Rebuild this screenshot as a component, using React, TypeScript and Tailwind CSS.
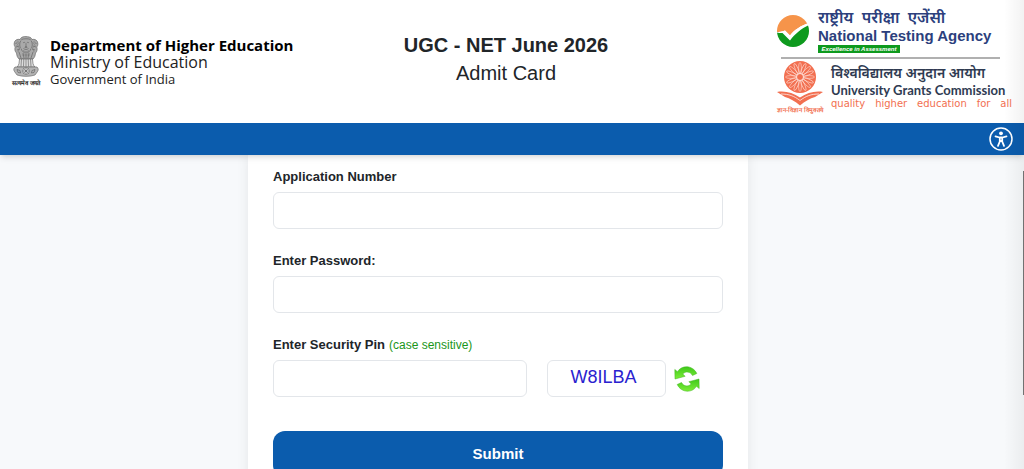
import { useState, type FormEvent } from "react";

const RAYS = Array.from({ length: 16 }, (_, i) => i * 22.5);

function NationalEmblem() {
  return (
    <svg viewBox="0 0 28 42" className="h-[42px] w-7" fill="none" stroke="#5a5a5a" strokeWidth="0.6">
      {/* lions */}
      <path fill="#a9a9a9" d="M8 3.5C9 .8 12 .4 14 .6s5 .1 6 2.9c2.500-.8 5.500.5 5.800 3.500.3 2-.3 3-1 4 .8 2.500.2 4.500-1.300 6-.2 2.500-.9 4.500-2.500 6H7c-1.600-1.500-2.300-3.500-2.500-6C3 15.500 2.400 13.500 3.200 11c-.7-1-1.300-2-1-4C2.500 4 5.500 2.700 8 3.500Z" />
      <path d="M9 4.500c-1.500 2-1.700 5-.6 7.500M19 4.500c1.500 2 1.700 5 .6 7.500M9.500 3.500c2.500-1 6.500-1 9 0M11 7c.8-.8 1.700-.8 2.300 0M14.700 7c.6-.8 1.500-.8 2.300 0M14 7.500v3l-1.200.8h2.400l-1.200-.8M11.500 12.500c1.500 1.300 3.500 1.300 5 0M9 12.500c1 3 3 4.500 5 4.500s4-1.500 5-4.500M3.500 7.500l2-.8M24.500 7.500l-2-.8M4 11l3-1M24 11l-3-1M5 14l3-1M23 14l-3-1M7 16l2 6M21 16l-2 6M11 17l1 5M17 17l-1 5M14 18v4" />
      <path stroke="#777" d="M5 4.500l2 2-2 3 2.500 2.500-1.500 4M23 4.500l-2 2 2 3-2.500 2.500 1.500 4M11 14.500l3 1.500 3-1.500M10 19h8" />
      {/* bell and column */}
      <path fill="#dcdcdc" d="M7.500 23h13l.5 4.500c.3 1.500 1 2.500 2 3.500H5c1-1 1.700-2 2-3.500Z" />
      <path d="M9.500 23L9 30.500M11.800 23l-.3 7.500M14 23v7.500M16.200 23l.3 7.500M18.500 23l.5 7.500" />
      {/* abacus with wheel */}
      <path fill="#b5b5b5" d="M3 31h22c1.500 1.500 1.500 3 .5 4.500L23 39c-5 1.800-13 1.800-18 0l-2.500-3.500C1.500 34 1.500 32.500 3 31Z" />
      <circle cx="14" cy="35" r="3.300" fill="#eee" />
      <path d="M10.700 35h6.600M14 31.700v6.600M11.700 32.700l4.600 4.600M16.300 32.700l-4.600 4.600M5 33.500l3 1 .5 2.500-2.500-.5ZM23 33.500l-3 1-.5 2.500 2.500-.5Z" />
    </svg>
  );
}

function TestingAgencyMark() {
  return (
    <svg viewBox="0 0 32 32" className="size-8 shrink-0">
      <defs>
        <clipPath id="disc">
          <circle cx="16" cy="16" r="16" />
        </clipPath>
      </defs>
      <g clipPath="url(#disc)">
        <path fill="#f6944a" d="M0 0h32v8C24 10.500 17 15 13 20.500L8 15.500C5 16.500 2 17 0 17Z" />
        <path fill="#fff" d="M0 17c2 0 5-.5 8-1.500l5 5C17 15 24 10.500 32 8v2.500C24 14 18 19 13.500 26L6 18.500C4 18.700 2 18.500 0 18Z" />
        <path fill="#0e9a1e" d="M0 17.500c2 .5 4 .7 5.500.5l7.500 7.500C18 19 24 13.500 32 10v22H0Z" />
      </g>
    </svg>
  );
}

function GrantsCommissionMark() {
  return (
    <svg viewBox="0 0 46 46" className="size-[46px]">
      <circle cx="23" cy="17" r="16" fill="#f26f50" />
      <g stroke="#ffe3db" strokeWidth="0.6" fill="none">
        {RAYS.map((deg) => (
          <ellipse key={deg} cx="23" cy="8" rx="1.400" ry="5.500" transform={`rotate(${deg} 23 17)`} />
        ))}
      </g>
      <circle cx="23" cy="17" r="3.500" fill="#f26f50" stroke="#fff" strokeWidth="0.8" />
      <path fill="#f26f50" d="M0 32c8-1.500 16 1 23 5.500 7-4.500 15-7 23-5.500L38 37c-5 1.500-10 4-15 8.500-5-4.500-10-7-15-8.500Z" />
      <path stroke="#fff" strokeWidth="0.7" fill="none" d="M4 34c8 0 13 2 19 6.500 6-4.500 11-6.500 19-6.500" />
    </svg>
  );
}

function AccessibilityIcon() {
  return (
    <svg viewBox="0 0 24 24" className="size-6" fill="none" stroke="#fff" strokeLinecap="round" strokeLinejoin="round">
      <circle cx="12" cy="12" r="11" strokeWidth="1.500" />
      <circle cx="12" cy="6.300" r="1.900" fill="#fff" stroke="none" />
      <path strokeWidth="1.800" d="M6.500 9.300l4 1.200h3l4-1.200M10.800 10.800v3.700L9 18.800M13.200 10.800v3.700l1.800 4.300M11 14h2" />
    </svg>
  );
}

function RefreshIcon() {
  return (
    <svg viewBox="0 0 26 26" className="size-[26px]">
      <defs>
        <linearGradient id="leaf" x1="0" y1="0" x2="0" y2="1">
          <stop offset="0" stopColor="#3fc81a" />
          <stop offset="1" stopColor="#7cee38" />
        </linearGradient>
      </defs>
      <g fill="url(#leaf)" stroke="#3cb51b" strokeWidth="0.5">
        <path d="M.8 3.500l2.700 2.200C7.500-1 18.500-1.300 22.800 7.500L18.500 9.500c-2-4-7-4.500-9.700-1.500l2.300 2.300L1 13Z" />
        <path d="M25.200 22.500l-2.700-2.200C18.500 27 7.500 27.300 3.200 18.500L7.500 16.500c2 4 7 4.500 9.700 1.500l-2.300-2.300L25 13Z" />
      </g>
    </svg>
  );
}

const labelClass = "text-[13px] leading-5 font-bold text-[#212529]";
const inputClass =
  "h-[37px] w-full rounded-md border border-[#e3e6ea] bg-white px-3 text-sm outline-none focus:border-[#0b5cad]";

export default function App() {
  const [applicationNumber, setApplicationNumber] = useState("");
  const [password, setPassword] = useState("");
  const [pin, setPin] = useState("");

  const handleSubmit = (e: FormEvent) => {
    e.preventDefault();
  };

  return (
    <div className="relative flex h-screen flex-col overflow-hidden bg-[#f7f9fb] font-['Liberation_Sans',Arial,sans-serif]">
      <header className="z-10 shrink-0 bg-white shadow-md">
        <div className="grid h-[123px] grid-cols-[1fr_auto_1fr] items-start pr-3">
          {/* Ministry */}
          <div className="flex gap-2 pt-9 pl-2.5 font-['Open_Sans',sans-serif] text-[#222]">
            <div className="flex w-8 flex-col items-center">
              <NationalEmblem />
              <span className="text-[6px] leading-[10px] font-bold whitespace-nowrap">सत्यमेव जयते</span>
            </div>
            <div className="whitespace-nowrap">
              <p className="text-[15px] leading-[18px] font-bold text-black">Department of Higher Education</p>
              <p className="text-[16px] leading-[17px]">Ministry of Education</p>
              <p className="text-[13px] leading-4">Government of India</p>
            </div>
          </div>

          {/* Title */}
          <div className="pt-[31px] text-center text-[20px] leading-7 text-[#212529]">
            <h1 className="font-bold">UGC - NET June 2026</h1>
            <p>Admit Card</p>
          </div>

          {/* Agencies */}
          <div className="w-[235px] justify-self-end pt-2 whitespace-nowrap">
            <div className="flex items-center gap-[9px] text-[#2c3f7d]">
              <TestingAgencyMark />
              <div>
                <p className="font-['Noto_Sans',sans-serif] text-[16px] leading-[18px] font-semibold">
                  राष्ट्रीय&nbsp; परीक्षा&nbsp; एजेंसी
                </p>
                <p className="text-[15px] leading-[19px] font-bold">National Testing Agency</p>
                <p className="w-[82px] bg-[#0e9a1e] text-center text-[6px] leading-[8px] font-bold text-white italic">
                  Excellence in Assessment
                </p>
              </div>
            </div>
            <hr className="mt-1 mr-3 ml-1 border-t-2 border-[#b0b0b0]" />
            <div className="flex gap-2 pt-px text-[#2f3b52]">
              <div className="flex w-[46px] flex-col items-center">
                <GrantsCommissionMark />
                <span className="text-[6px] leading-[8px] font-bold text-[#f26f50]">ज्ञान-विज्ञान विमुक्तये</span>
              </div>
              <div className="flex-1 pt-1">
                <p className="font-['Noto_Sans',sans-serif] text-[14px] leading-[18px] font-semibold">
                  विश्वविद्यालय अनुदान आयोग
                </p>
                <p className="font-['Lato',sans-serif] text-[13px] leading-4 font-bold">University Grants Commission</p>
                <p className="flex justify-between font-['DejaVu_Sans',sans-serif] text-[10px] leading-3 text-[#f26f50]">
                  <span>quality</span> <span>higher</span> <span>education</span> <span>for</span> <span>all</span>
                </p>
              </div>
            </div>
          </div>
        </div>
        <div className="flex h-8 items-center justify-end bg-[#0b5cad] pr-[11px]">
          <button type="button" aria-label="Accessibility options" className="cursor-pointer">
            <AccessibilityIcon />
          </button>
        </div>
      </header>

      <main className="flex flex-1 justify-center pr-7">
        <form
          onSubmit={handleSubmit}
          className="flex h-fit w-full max-w-[500px] flex-col gap-[22px] bg-white px-[25px] pt-3 pb-6 shadow-[0_0_12px_rgba(0,0,0,0.08)]"
        >
          <div className="flex flex-col gap-[5px]">
            <label htmlFor="application-number" className={labelClass}>Application Number</label>
            <input
              id="application-number"
              type="text"
              value={applicationNumber}
              onChange={(e) => setApplicationNumber(e.target.value)}
              className={inputClass}
            />
          </div>

          <div className="flex flex-col gap-[5px]">
            <label htmlFor="password" className={labelClass}>Enter Password:</label>
            <input
              id="password"
              type="password"
              value={password}
              onChange={(e) => setPassword(e.target.value)}
              className={inputClass}
            />
          </div>

          <div className="flex flex-col gap-[5px]">
            <label htmlFor="security-pin" className={labelClass}>
              Enter Security Pin
              <span className="ml-1 text-[12px] font-normal text-[#1a961a]">(case sensitive)</span>
            </label>
            <div className="flex items-center">
              <input
                id="security-pin"
                type="text"
                value={pin}
                onChange={(e) => setPin(e.target.value)}
                className={`${inputClass} mr-5 max-w-[254px]`}
              />
              <div className="h-[37px] w-[119px] shrink-0 rounded-md border border-[#e3e6ea] pr-1.5 text-center text-[18px] leading-8 text-[#2a22cf]">
                W8ILBA
              </div>
              <button type="button" aria-label="Refresh security pin" className="ml-2 shrink-0 cursor-pointer">
                <RefreshIcon />
              </button>
            </div>
          </div>

          <button
            type="submit"
            className="mt-3 h-[46px] cursor-pointer rounded-xl bg-[#0b5cad] text-[15px] font-bold text-white hover:bg-[#094c90]"
          >
            Submit
          </button>
        </form>
      </main>

      {/* Right edge shade and scroll thumb */}
      <div className="pointer-events-none absolute inset-y-0 right-0 z-20 w-5 bg-linear-to-l from-black/5 to-transparent" />
      <div className="absolute top-[171px] right-0 h-56 w-px bg-[#777]" />
    </div>
  );
}
